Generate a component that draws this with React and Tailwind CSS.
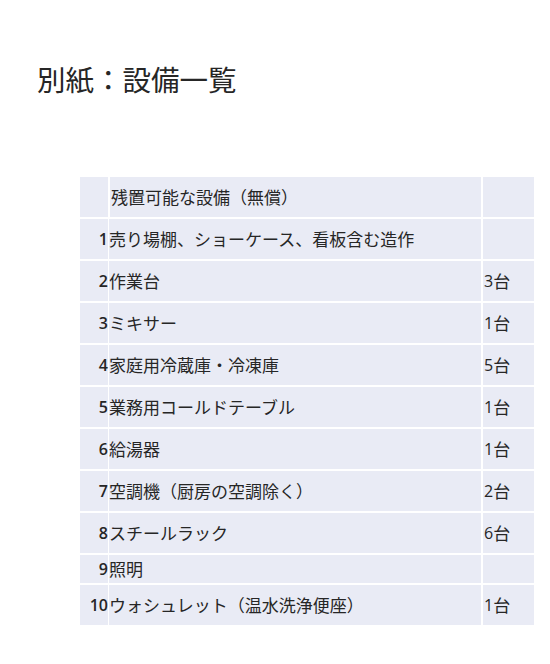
const rows = [
  { no: '1', name: '売り場棚、ショーケース、看板含む造作', qty: '' },
  { no: '2', name: '作業台', qty: '3台' },
  { no: '3', name: 'ミキサー', qty: '1台' },
  { no: '4', name: '家庭用冷蔵庫・冷凍庫', qty: '5台' },
  { no: '5', name: '業務用コールドテーブル', qty: '1台' },
  { no: '6', name: '給湯器', qty: '1台' },
  { no: '7', name: '空調機（厨房の空調除く）', qty: '2台' },
  { no: '8', name: 'スチールラック', qty: '6台' },
  { no: '9', name: '照明', qty: '', short: true },
  { no: '10', name: 'ウォシュレット（温水洗浄便座）', qty: '1台' },
];

const jp = { fontFamily: '"Noto Sans CJK JP", "Noto Sans", sans-serif' };
const num = { fontFamily: '"Open Sans", "Noto Sans CJK JP", sans-serif' };

export default function App() {
  return (
    <div className="w-[550px] h-[664px] bg-white text-[#262626]" style={jp}>
      <h1 className="pl-[37px] pt-[59px] text-[28.5px] leading-[40px] font-normal">別紙：設備一覧</h1>

      <div className="ml-[80px] mt-[78px] grid w-[454px] grid-cols-[28px_371px_51px] gap-[2px]">
        <div className="h-[40px] bg-[#e9ebf5]" />
        <div className="flex h-[40px] items-center bg-[#e9ebf5] pl-[1px] text-[17px]">残置可能な設備（無償）</div>
        <div className="h-[40px] bg-[#e9ebf5]" />

        {rows.map((r) => (
          <Row key={r.no} {...r} />
        ))}
      </div>
    </div>
  );
}

function Row({ no, name, qty, short }) {
  const h = short ? 'h-[28px]' : 'h-[40px]';
  return (
    <>
      <div className={`${h} flex items-center justify-end bg-[#e9ebf5] text-[16px] font-semibold`} style={num}>
        {no}
      </div>
      <div className={`${h} -ml-[1px] flex items-center bg-[#e9ebf5] text-[17px] whitespace-nowrap`}>{name}</div>
      <div className={`${h} flex items-center bg-[#e9ebf5] pl-[1px] text-[17px]`}>
        {qty && (
          <>
            <span className="text-[16px]" style={num}>{qty.slice(0, -1)}</span>
            <span>台</span>
          </>
        )}
      </div>
    </>
  );
}
